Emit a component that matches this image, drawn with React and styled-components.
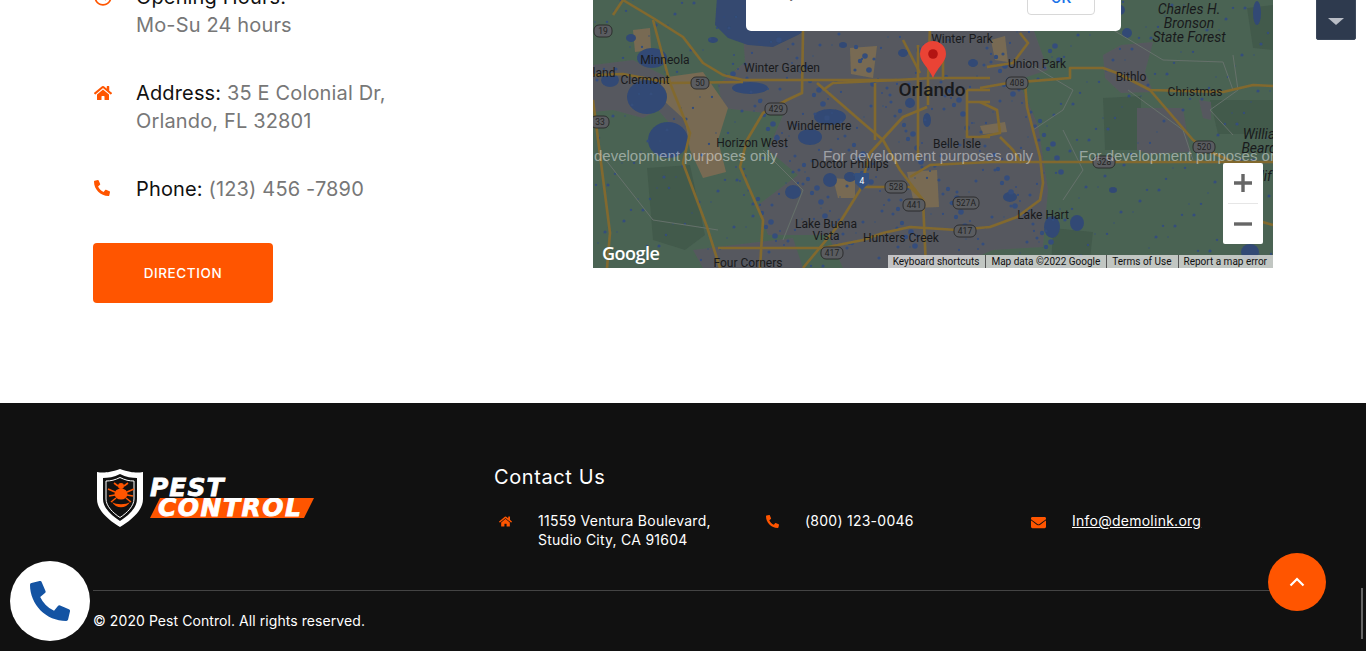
import React from 'react'
import styled, { createGlobalStyle } from 'styled-components'
import { FaHome, FaPhone, FaEnvelope, FaRegClock, FaPhoneAlt } from 'react-icons/fa'

const orange = '#ff5500'
const bodyFont = '"Inter", "Open Sans", sans-serif'

const GlobalStyle = createGlobalStyle`
  html, body {
    margin: 0;
    height: 651px;
    overflow: hidden;
    background: #fff;
    font-family: ${bodyFont};
  }
`

const Page = styled.div`
  position: relative;
  width: 1366px;
  height: 651px;
  overflow: hidden;
`

const ContactSection = styled.section`
  margin-top: -17px;
  height: 420px;
  padding: 0 93px;
  box-sizing: border-box;
  display: grid;
  grid-template-columns: 500px 680px;
  background: #fff;
`

const InfoColumn = styled.div`
  display: flex;
  flex-direction: column;
  gap: 40px;
  align-items: flex-start;
`

const InfoRow = styled.div`
  display: grid;
  grid-template-columns: 43px 280px;
  font-size: 20px;
  line-height: 28px;
  letter-spacing: 0.15px;
  color: #777;
`

const InfoIcon = styled.span`
  color: ${orange};
  font-size: ${p => p.$size || 18}px;
  line-height: 1;
  padding: 5px 0 0 1px;
`

const InfoLabel = styled.span`
  color: #111;
`

const DirectionButton = styled.a`
  width: 180px;
  height: 60px;
  display: flex;
  align-items: center;
  justify-content: center;
  background: ${orange};
  color: #fff;
  border-radius: 4px;
  font-size: 13.5px;
  font-weight: 500;
  letter-spacing: 0.6px;
`

const MapFrame = styled.div`
  position: relative;
  width: 680px;
  height: 285px;
  overflow: hidden;
  background: #4a6353;
`

const MapCanvas = styled.svg`
  display: block;
  width: 680px;
  height: 285px;
`

const MapLabel = styled.text`
  font-family: Roboto, sans-serif;
  font-size: ${p => p.$size || 12}px;
  font-weight: ${p => p.$weight || 400};
  font-style: ${p => (p.$italic ? 'italic' : 'normal')};
  fill: #191a1c;
  text-anchor: middle;
`

const Watermark = styled.text`
  font-family: 'Liberation Sans', sans-serif;
  font-size: 15px;
  fill: rgba(255, 255, 255, 0.45);
`

const ShieldText = styled.text`
  font-family: Roboto, sans-serif;
  font-size: 8.5px;
  fill: ${p => p.$light ? '#fff' : '#222'};
  text-anchor: middle;
`

const GoogleMark = styled.span`
  position: absolute;
  left: 9px;
  bottom: 3px;
  font-family: 'Open Sans', sans-serif;
  font-size: 18px;
  font-weight: 600;
  letter-spacing: -0.5px;
  color: #fff;
`

const Attribution = styled.div`
  position: absolute;
  right: 0;
  bottom: 0;
  height: 13px;
  display: flex;
  background: rgba(222, 222, 222, 0.8);
  font-family: Roboto, sans-serif;
  font-size: 10px;
  line-height: 13px;
  color: #111;
`

const AttributionItem = styled.span`
  padding: 0 6px 0 5px;
  white-space: nowrap;
  & + & {
    border-left: 1px solid #555;
  }
`

const ZoomControl = styled.div`
  position: absolute;
  left: 630px;
  top: 180px;
  width: 40px;
  height: 81px;
  background: #fff;
  border-radius: 2px;
  display: flex;
  flex-direction: column;
  align-items: center;
`

const ZoomButton = styled.div`
  width: 100%;
  height: 40px;
  display: flex;
  align-items: center;
  justify-content: center;
`

const ZoomDivider = styled.div`
  width: 30px;
  height: 1px;
  background: #e6e6e6;
`

const MapDialog = styled.div`
  position: absolute;
  left: 153px;
  top: 0;
  width: 375px;
  height: 48px;
  box-sizing: border-box;
  background: #fff;
  border-radius: 0 0 5px 5px;
  display: flex;
  justify-content: space-between;
  padding: 0 26px 0 25px;
`

const DialogText = styled.span`
  font-family: Roboto, sans-serif;
  font-size: 11.5px;
  line-height: 14px;
  color: #555;
  letter-spacing: 0.6px;
  margin-top: 5px;
`

const DialogButton = styled.span`
  width: 68px;
  height: 32px;
  box-sizing: border-box;
  border: 1px solid #d8d8d8;
  border-radius: 4px;
  padding-bottom: 2px;
  display: flex;
  align-items: center;
  justify-content: center;
  font-family: Roboto, sans-serif;
  font-size: 15px;
  font-weight: 500;
  color: #1a73e8;
`

const TopWidget = styled.div`
  position: absolute;
  left: 1316px;
  top: -10px;
  width: 40px;
  height: 50px;
  box-sizing: border-box;
  background: #2e3a4e;
  border: 1px solid #3b475a;
  border-radius: 2px;
  display: flex;
  justify-content: center;
  padding-top: 27px;
`

const Caret = styled.span`
  width: 0;
  height: 0;
  border-left: 8px solid transparent;
  border-right: 8px solid transparent;
  border-top: 7px solid #b9bdc6;
`

const Footer = styled.footer`
  height: 248px;
  background: #111;
  color: #fff;
  padding: 0 93px;
  box-sizing: border-box;
`

const FooterTop = styled.div`
  height: 188px;
  box-sizing: border-box;
  padding-top: 61px;
  display: grid;
  grid-template-columns: 401px 1fr;
  border-bottom: 1px solid #444;
`

const LogoWrap = styled.div`
  display: flex;
  padding: 5px 0 0 4px;
  gap: 7px;
`

const LogoWords = styled.div`
  display: flex;
  flex-direction: column;
  padding-top: 9px;
`

const LogoPest = styled.span`
  font-family: 'DejaVu Sans', sans-serif;
  font-weight: 700;
  font-style: italic;
  font-size: 25px;
  line-height: 20px;
  letter-spacing: 1px;
  -webkit-text-stroke: 0.8px #fff;
  color: #fff;
`

const LogoControl = styled.span`
  font-family: 'DejaVu Sans', sans-serif;
  font-weight: 700;
  font-style: italic;
  font-size: 25px;
  line-height: 20px;
  letter-spacing: 1.5px;
  -webkit-text-stroke: 0.8px #fff;
  color: #fff;
  width: 164px;
  padding-left: 8px;
  box-sizing: border-box;
  white-space: nowrap;
  overflow: hidden;
  background: ${orange};
  clip-path: polygon(10px 0, 100% 0, calc(100% - 10px) 100%, 0 100%);
`

const ContactTitle = styled.h3`
  margin: 0 0 21px;
  font-size: 20px;
  line-height: 26px;
  font-weight: 400;
  letter-spacing: 0.6px;
`

const ContactGrid = styled.div`
  display: grid;
  grid-template-columns: repeat(3, 267px);
`

const ContactItem = styled.div`
  display: grid;
  grid-template-columns: 44px 1fr;
  font-size: 14px;
  line-height: 19px;
  letter-spacing: 0.25px;
`

const ContactIcon = styled.span`
  color: ${orange};
  font-size: ${p => p.$size || 13}px;
  line-height: 1;
  padding: 4px 0 0 ${p => p.$left || 5}px;
`

const ContactLink = styled.a`
  color: #fff;
  text-decoration: underline;
`

const Copyright = styled.p`
  margin: 0;
  padding-top: 20px;
  font-size: 14px;
  line-height: 19px;
  letter-spacing: 0.07px;
`

const CallBubble = styled.a`
  position: absolute;
  left: 10px;
  top: 561px;
  width: 80px;
  height: 80px;
  border-radius: 50%;
  background: #fff;
  color: #1353a3;
  font-size: 40px;
  display: flex;
  align-items: center;
  justify-content: center;
`

const ScrollTop = styled.a`
  position: absolute;
  left: 1268px;
  top: 553px;
  width: 58px;
  height: 58px;
  border-radius: 50%;
  background: ${orange};
  display: flex;
  align-items: center;
  justify-content: center;
`

const ScrollThumb = styled.div`
  position: absolute;
  left: 1361px;
  top: 588px;
  width: 2px;
  height: 51px;
  background: #666;
`

const urban = [
  '150,32 215,30 255,12 330,30 390,22 440,28 455,70 425,80 445,125 455,190 450,247 400,250 372,262 320,268 250,268 235,235 175,235 165,205 205,175 175,150 190,115 130,108 125,85 152,62',
  '0,65 40,60 70,75 120,110 100,150 65,110 50,118 20,110 0,112',
  '510,55 528,45 560,42 552,72 560,92 528,93 512,78',
  '544,108 590,108 597,152 556,154 544,150',
  '606,100 618,102 618,120 610,118',
  '100,250 200,238 210,268 110,268'
]

const darkGreen = [
  '54,168 97,165 112,235 92,250 60,240',
  '510,98 548,96 548,150 512,150',
  '617,100 680,100 680,134 625,134',
  '654,8 680,5 680,50 660,48',
  '460,228 500,232 496,268 458,268'
]

const tan = [
  '67,78 110,72 135,108 125,140 133,172 110,178 97,150 92,120 70,100',
  '40,30 57,28 58,50 42,52',
  '257,48 284,46 280,78 258,74',
  '314,172 344,170 346,207 322,208',
  '398,40 412,36 415,62 402,60',
  '387,126 412,122 414,132 390,134',
  '240,178 262,180 262,198 245,198'
]

const water = [
  [59, 58, 15, 10], [54, 97, 20, 17], [75, 140, 20, 18], [17, 80, 9, 7], [157, 88, 18, 6],
  [237, 117, 16, 8], [217, 137, 12, 8], [237, 180, 7, 7], [200, 192, 8, 7], [257, 177, 6, 5],
  [317, 103, 5, 5], [334, 120, 4, 7], [380, 63, 5, 4], [310, 53, 5, 4], [417, 197, 7, 5],
  [459, 227, 8, 11], [484, 223, 7, 8], [657, 252, 9, 8], [534, 33, 5, 5], [527, 10, 5, 5],
  [664, 13, 4, 12], [38, 38, 5, 4], [120, 40, 5, 3], [250, 45, 4, 3], [520, 190, 4, 3]
]

// scattered ponds, same every render
const ponds = Array.from({ length: 420 }, (_, i) => {
  const a = (i * 7919 + 131) % 680
  const b = (i * 104729 + 17) % 268
  return [a, b, 0.7 + ((i * 13) % 3) * 0.45]
})

// denser ones around the metro area
const metroPonds = Array.from({ length: 170 }, (_, i) => {
  const a = 140 + (i * 3571 + 59) % 330
  const b = 40 + (i * 2741 + 23) % 210
  return [a, b, 1 + ((i * 7) % 4) * 0.6]
})

const roads = [
  'M30,0 L60,18 L90,37 L110,63 L130,75 L150,80 L304,80 L340,78 L397,78',
  'M0,75 L30,74 L77,83 L150,82',
  'M60,20 L77,83 L97,133 L90,163 L114,227 L127,268',
  'M210,30 L209,93 L194,100 L170,113 L154,140 L147,167 L170,220 L167,268',
  'M224,83 L270,123 L290,140 L307,170 L330,200 L333,268',
  'M334,107 L310,117 L277,153 L267,190 L244,227 L210,268',
  'M338,0 L335,80 L335,105',
  'M282,83 L282,140',
  'M325,45 L325,160',
  'M317,177 L337,165 L397,162 L680,162',
  'M270,187 L317,187 L330,200',
  'M290,233 L317,227 L364,230 L397,227 L424,217 L447,200 L450,183 L447,157 L434,107 L432,83',
  'M125,248 L230,248 L270,240 L290,233',
  'M387,102 L404,110 L407,133 L387,137 M407,137 L420,150 L428,163',
  'M0,100 L17,233 L14,268',
  'M374,90 L397,90 M374,90 L374,137 L397,137 M374,102 L397,102',
  'M230,90 L240,83 L304,80',
  'M387,88 L415,83 L477,78 L477,68 L510,68 L524,73 L557,90 L630,92 L660,85 L680,86',
  'M557,90 L600,140 L620,153 L640,162',
  'M310,40 L327,73 M350,50 L350,80',
  'M427,33 L435,43 L420,63 L394,67',
  'M20,15 L30,0 M645,215 L680,225'
]

const thinRoads = [
  'M430,60 L480,90 L470,110 L440,130',
  'M535,90 L590,130 L600,160',
  'M640,55 L645,90 L617,110 L640,135',
  'M170,150 L210,190 L190,240',
  'M5,150 L60,220 L125,230',
  'M520,30 L570,60 L630,62 L640,90',
  'M470,130 L490,170 L470,200'
]

const labels = [
  ['Winter Garden', 189, 72],
  ['Minneola', 72, 64],
  ['Clermont', 52, 84],
  ['land', 11, 77],
  ['Windermere', 226, 130],
  ['Horizon West', 159, 147],
  ['Doctor Phillips', 257, 168],
  ['Belle Isle', 364, 148],
  ['Lake Buena', 233, 228],
  ['Vista', 233, 240],
  ['Hunters Creek', 308, 242],
  ['Four Corners', 155, 267],
  ['Union Park', 444, 68],
  ['Bithlo', 538, 81],
  ['Christmas', 602, 96],
  ['Winter Park', 369, 43],
  ['Lake Hart', 450, 219]
]

const forestLabels = [
  ['Charles H.', 596, 14],
  ['Bronson', 596, 28],
  ['State Forest', 596, 42],
  ['Willia', 666, 139],
  ['Beard', 666, 153],
  ['Wildlif', 660, 181]
]

const shields = [
  ['19', 10, 31, 9], ['50', 107, 83, 9], ['429', 183, 109, 11], ['33', 7, 122, 9],
  ['408', 424, 83, 11], ['520', 611, 147, 11], ['528', 511, 162, 11], ['528', 303, 187, 11],
  ['441', 321, 205, 11], ['527A', 373, 203, 13], ['417', 372, 231, 11], ['417', 239, 253, 11]
]

const MapDrawing = () => (
  <MapCanvas viewBox="0 -17 680 285">
    <defs>
      <filter id="soft" x="0" y="0" width="100%" height="100%">
        <feGaussianBlur stdDeviation="0.7" />
      </filter>
    </defs>
    <rect x="0" y="-17" width="680" height="285" fill="#4a6353" />
    <g filter="url(#soft)">
      {darkGreen.map(p => <polygon key={p} points={p} fill="#425a4b" />)}
      {urban.map(p => <polygon key={p} points={p} fill="#57595f" />)}
      {tan.map(p => <polygon key={p} points={p} fill="#786b52" />)}
      <path d="M125,-17 L122,25 L135,38 L155,45 L180,47 L205,35 L225,22 L225,-17 Z" fill="#34496f" />
      {water.map(([x, y, rx, ry]) => (
        <ellipse key={`${x}-${y}`} cx={x} cy={y} rx={rx} ry={ry} fill="#324a74" />
      ))}
      {ponds.map(([x, y, r]) => <circle key={`${x}-${y}`} cx={x} cy={y} r={r} fill="#344e7c" />)}
      {metroPonds.map(([x, y, r]) => <circle key={`m${x}-${y}`} cx={x} cy={y} r={r} fill="#344e7c" />)}
      {thinRoads.map(d => <path key={d} d={d} fill="none" stroke="#66716b" strokeWidth="1" />)}
      {roads.map(d => (
        <path key={d} d={d} fill="none" stroke="#82692f" strokeWidth="2.6" strokeLinejoin="round" />
      ))}
    </g>
    <polygon points="262,173 276,173 276,183 269,190 262,183" fill="#33507f" />
    <ShieldText x="269" y="184" $light>4</ShieldText>
    {shields.map(([t, x, y, w]) => (
      <g key={`${t}-${x}`}>
        <rect x={x - w} y={y - 6} width={w * 2} height="12" rx="5" fill="#5a5c60" stroke="#222" strokeWidth="0.8" />
        <ShieldText x={x} y={y + 3}>{t}</ShieldText>
      </g>
    ))}
    {labels.map(([t, x, y]) => <MapLabel key={t} x={x} y={y}>{t}</MapLabel>)}
    {forestLabels.map(([t, x, y]) => <MapLabel key={t} x={x} y={y} $italic $size={14}>{t}</MapLabel>)}
    <MapLabel x="339" y="96" $size={19} $weight={500}>Orlando</MapLabel>
    <Watermark x="1" y="161">development purposes only</Watermark>
    <Watermark x="230" y="161">For development purposes only</Watermark>
    <Watermark x="486" y="161">For development purposes only</Watermark>
    <path d="M340,78 C336,68 327,62 327,54 A13,13 0 0 1 353,54 C353,62 344,68 340,78 Z" fill="#ea4335" />
    <circle cx="340" cy="54" r="4.8" fill="#b31412" />
  </MapCanvas>
)

const ShieldLogo = () => (
  <svg width="46" height="58" viewBox="0 0 46 58">
    <path d="M0,3 C6,4 11,4 23,0 C35,4 40,4 46,3 V30 C46,42 33,52 23,58 C13,52 0,42 0,30 Z" fill="#fff" />
    <path d="M6,9 C11,9 17,8 23,5 C29,8 35,9 40,9 V30 C40,39 31,47 23,52 C15,47 6,39 6,30 Z" fill="#111" />
    <path d="M9,12 C14,12 18,11 23,8.5 C28,11 32,12 37,12 V30 C37,37 30,44 23,48.5 C16,44 9,37 9,30 Z" fill="none" stroke="#fff" strokeWidth="1" />
    <ellipse cx="24" cy="25" rx="6.5" ry="5.5" fill={orange} />
    <circle cx="24" cy="17" r="3" fill={orange} />
    <path d="M11,20 L18,23 M12,27 L18,26 M14,33 L19,29 M37,20 L30,23 M36,27 L30,26 M34,33 L29,29 M17,14 L21,17 M31,14 L27,17" stroke={orange} strokeWidth="1.6" fill="none" />
    <path d="M15,33 C19,40 29,40 33,33 C29,36 19,36 15,33 Z" fill={orange} />
  </svg>
)

const App = () => (
  <Page>
    <GlobalStyle />
    <ContactSection>
      <InfoColumn>
        <InfoRow>
          <InfoIcon><FaRegClock /></InfoIcon>
          <div>
            <InfoLabel>Opening Hours:</InfoLabel>
            <br />
            Mo-Su 24 hours
          </div>
        </InfoRow>
        <InfoRow>
          <InfoIcon><FaHome /></InfoIcon>
          <div>
            <InfoLabel>Address:</InfoLabel> 35 E Colonial Dr,
            <br />
            Orlando, FL 32801
          </div>
        </InfoRow>
        <InfoRow>
          <InfoIcon $size={16}><FaPhone style={{ transform: 'scaleX(-1)' }} /></InfoIcon>
          <div>
            <InfoLabel>Phone:</InfoLabel> (123) 456 -7890
          </div>
        </InfoRow>
        <DirectionButton>DIRECTION</DirectionButton>
      </InfoColumn>
      <MapFrame>
        <MapDrawing />
        <MapDialog>
          <DialogText>Do you own this website?</DialogText>
          <DialogButton>OK</DialogButton>
        </MapDialog>
        <GoogleMark>Google</GoogleMark>
        <ZoomControl>
          <ZoomButton>
            <svg width="18" height="18" viewBox="0 0 18 18"><path d="M0,9 H18 M9,0 V18" stroke="#666" strokeWidth="3.4" /></svg>
          </ZoomButton>
          <ZoomDivider />
          <ZoomButton>
            <svg width="18" height="18" viewBox="0 0 18 18"><path d="M0,9 H18" stroke="#666" strokeWidth="3.4" /></svg>
          </ZoomButton>
        </ZoomControl>
        <Attribution>
          <AttributionItem>Keyboard shortcuts</AttributionItem>
          <AttributionItem>Map data ©2022 Google</AttributionItem>
          <AttributionItem>Terms of Use</AttributionItem>
          <AttributionItem>Report a map error</AttributionItem>
        </Attribution>
      </MapFrame>
    </ContactSection>
    <Footer>
      <FooterTop>
        <LogoWrap>
          <ShieldLogo />
          <LogoWords>
            <LogoPest>PEST</LogoPest>
            <LogoControl>CONTROL</LogoControl>
          </LogoWords>
        </LogoWrap>
        <div>
          <ContactTitle>Contact Us</ContactTitle>
          <ContactGrid>
            <ContactItem>
              <ContactIcon><FaHome /></ContactIcon>
              <span>11559 Ventura Boulevard,<br />Studio City, CA 91604</span>
            </ContactItem>
            <ContactItem>
              <ContactIcon><FaPhone style={{ transform: 'scaleX(-1)' }} /></ContactIcon>
              <span>(800) 123-0046</span>
            </ContactItem>
            <ContactItem>
              <ContactIcon $size={15} $left={3}><FaEnvelope /></ContactIcon>
              <span><ContactLink>Info@demolink.org</ContactLink></span>
            </ContactItem>
          </ContactGrid>
        </div>
      </FooterTop>
      <Copyright>© 2020 Pest Control. All rights reserved.</Copyright>
    </Footer>
    <TopWidget><Caret /></TopWidget>
    <CallBubble><FaPhoneAlt /></CallBubble>
    <ScrollTop>
      <svg width="16" height="10" viewBox="0 0 16 10"><path d="M1.5,8.5 L8,2 L14.5,8.5" fill="none" stroke="#fff" strokeWidth="2.2" /></svg>
    </ScrollTop>
    <ScrollThumb />
  </Page>
)

export default App
